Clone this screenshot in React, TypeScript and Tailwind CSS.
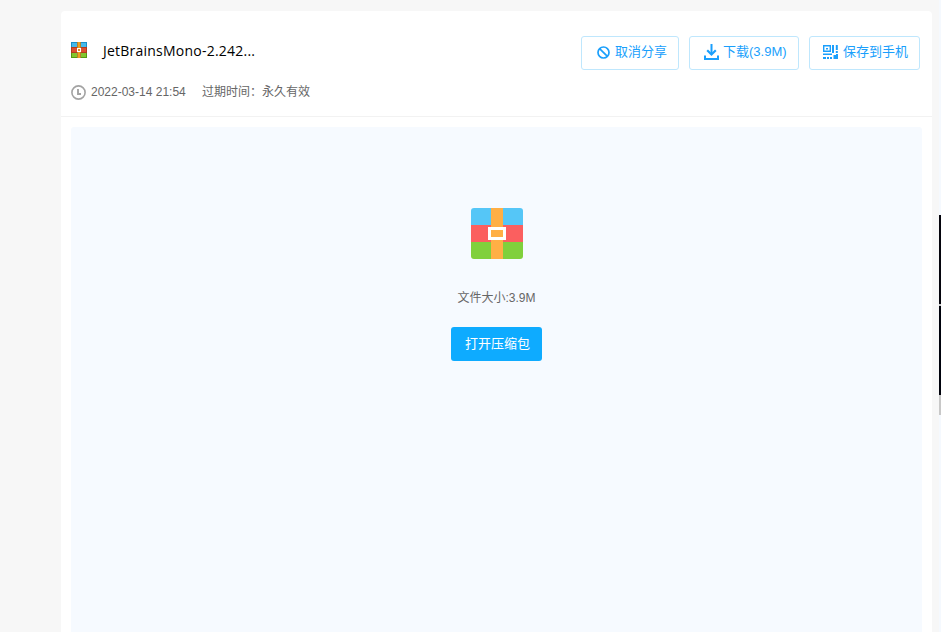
import type { ReactNode } from "react";

function ArchiveIconSmall() {
  return (
    <svg width="16" height="16" viewBox="0 0 16 16" shapeRendering="crispEdges">
      <path fill="#1a8ec5" d="M0 0h16v5H0z" />
      <path fill="#45b9ea" d="M1 1h14v4H1z" />
      <path fill="#b23a1e" d="M0 5h16v6H0z" />
      <path fill="#db5030" d="M1 6h14v4H1z" />
      <path fill="#529913" d="M0 11h16v5H0z" />
      <path fill="#83c52d" d="M1 11h14v4H1z" />
      <path fill="#b5812a" d="M6 0h1v16H6zM9 0h1v16H9z" />
      <path fill="#eda021" d="M7 0h2v16H7z" />
      <path fill="#fff" d="M6 6h4v4H6z" />
      <path fill="#d88a24" d="M7 7h2v2H7z" />
    </svg>
  );
}

function ArchiveIcon() {
  return (
    <svg width="52" height="51" viewBox="0 0 52 51">
      <path fill="#55c6f7" d="M3 0h46a3 3 0 0 1 3 3v14H0V3a3 3 0 0 1 3-3z" />
      <path fill="#fb5f5f" d="M0 17h52v17H0z" />
      <path fill="#80d03c" d="M0 34h52v14a3 3 0 0 1-3 3H3a3 3 0 0 1-3-3z" />
      <path fill="#ffaf45" d="M20 0h12v51H20z" />
      <path fill="#ffaf45" stroke="#fff" strokeWidth="3" d="M18.5 20.5h15v10h-15z" />
    </svg>
  );
}

function ClockIcon() {
  return (
    <svg width="15" height="15" viewBox="0 0 15 15" fill="none" stroke="#a3a3a3">
      <circle cx="7.5" cy="7.5" r="6.6" strokeWidth="1.6" />
      <path d="M7 4v5h3" strokeWidth="1.9" />
    </svg>
  );
}

function BanIcon() {
  return (
    <svg width="13" height="13" viewBox="0 0 13 13" fill="none" stroke="#1a9ffc" strokeWidth="1.7">
      <circle cx="6.5" cy="6.5" r="5.5" />
      <path d="M2.6 2.6l7.8 7.8" />
    </svg>
  );
}

function DownloadIcon() {
  return (
    <svg width="15" height="16" viewBox="0 0 15 16" fill="none" stroke="#1a9ffc" strokeWidth="2">
      <path d="M7.5 0v10" />
      <path d="M3.2 6.3l4.3 4.2 4.3-4.2" strokeWidth="2.2" />
      <path d="M1 11.5V15h13v-3.5" />
    </svg>
  );
}

function QrIcon() {
  return (
    <svg width="15" height="14" viewBox="0 0 15 14" fill="#1a9ffc">
      <path fillRule="evenodd" d="M0 0h8v7H0zM1.4 1.4v4.2h5.2V1.4z" />
      <path d="M3 3h2v1.4H3zM9 0h2v8H9zM12.8 0h2v5h-2zM12.8 6h2v2h-2zM0 8.5h9V10H0zM10.5 10H15v4h-4.5zM13 9h2v2h-2zM0 12h3v2H0zM4 12h2v2H4zM7 12h2v2H7z" />
    </svg>
  );
}

function ActionButton({ icon, label, className }: { icon: ReactNode; label: string; className: string }) {
  return (
    <button
      className={`flex h-[34px] items-center whitespace-nowrap rounded-[3px] border border-[#bfe7fd] bg-white pb-0.5 text-[13px] leading-4 text-[#1a9ffc] ${className}`}
    >
      {icon}
      <span className="-mt-px">{label}</span>
    </button>
  );
}

export default function App() {
  return (
    <div className="flex h-[632px] w-[941px] overflow-hidden bg-[#f7f7f7] font-['Liberation_Sans','Noto_Sans_CJK_SC',sans-serif]">
      <main className="ml-[61px] mt-[11px] flex w-[871px] flex-col rounded-t bg-white">
        <header className="h-[106px] border-b border-[#f2f2f2] pl-2.5 pr-3 pt-[25px]">
          <div className="flex h-[34px] justify-between">
            <div className="flex">
              <div className="mt-[6px] w-8">
                <ArchiveIconSmall />
              </div>
              <h1 className="mt-[5px] whitespace-nowrap font-['Open_Sans','Noto_Sans_CJK_SC',sans-serif] text-[14px] leading-5 tracking-[0.23px] text-black">
                JetBrainsMono-2.242...
              </h1>
            </div>
            <div className="flex gap-2.5">
              <ActionButton icon={<BanIcon />} label="取消分享" className="w-[98px] gap-[5px] pl-[15px]" />
              <ActionButton icon={<DownloadIcon />} label="下载(3.9M)" className="w-[110px] gap-[4px] pl-[14px]" />
              <ActionButton icon={<QrIcon />} label="保存到手机" className="w-[111px] gap-[5px] pl-[13px]" />
            </div>
          </div>
          <div className="mt-[14px] flex h-4 items-center whitespace-nowrap text-[12px] leading-4 text-[#666]">
            <ClockIcon />
            <span className="ml-[5px] w-[111px]">2022-03-14 21:54</span>
            <span>过期时间：永久有效</span>
          </div>
        </header>
        <section className="mx-2.5 mt-2.5 flex flex-1 flex-col items-center rounded-t-[3px] bg-[#f6faff] pt-[81px]">
          <ArchiveIcon />
          <p className="mt-[31px] text-[12px] leading-4 text-[#666]">文件大小:3.9M</p>
          <button className="mt-[21px] h-[34px] w-[91px] rounded-[3px] bg-[#0eabff] pl-0.5 text-[13px] leading-4 text-white">
            打开压缩包
          </button>
        </section>
      </main>
      <aside className="ml-[7px] flex w-0.5 flex-col bg-[#f5f9fe]">
        <div className="mt-[215px] h-[89px] bg-[#05050d]" />
        <div className="h-0.5 bg-[#c8c8c8]" />
        <div className="h-[89px] bg-[#00020c]" />
        <div className="h-5 bg-[#c8c8c8]" />
      </aside>
    </div>
  );
}
